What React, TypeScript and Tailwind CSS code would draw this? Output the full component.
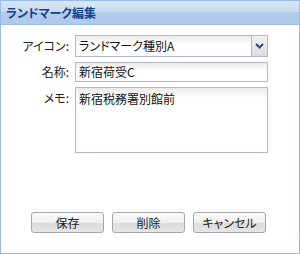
import React from "react";

function Btn({ label }: { label: string }) {
  return (
    <div className="w-[73px] h-[21px] rounded-[3px] border border-[#a6a6a6] bg-[linear-gradient(to_bottom,#fbfbfb_0%,#f0f0f0_50%,#dcdcdc_51%,#e6e6e6_100%)] flex items-center justify-center text-[12px] text-[#222] leading-none">
      {label}
    </div>
  );
}

export default function App() {
  return (
    <div className="w-[300px] h-[254px] border border-[#99bbe8] border-t-0 flex flex-col bg-white overflow-hidden font-['Noto_Sans_CJK_JP','Noto_Sans',sans-serif] [font-feature-settings:'palt']">
      <div className="h-[25px] shrink-0 bg-[linear-gradient(to_bottom,#d9e6f5_0%,#c9dbf0_48%,#b1cbea_50%,#afc9ea_100%)] border-t border-[#99bbe8] border-b border-b-[#99bbe8] flex items-center pl-[5px]">
        <span className="text-[12px] font-bold text-[#15428b] leading-none">ランドマーク編集</span>
      </div>
      <div className="flex-1 flex flex-col pt-[10px]">
        <div className="flex items-center h-[22px]">
          <div className="w-[69px] text-right text-[12px] text-[#222] pr-[1px]">アイコン:</div>
          <div className="ml-[5px] w-[193px] h-[22px] flex border border-[#b5b8c8]">
            <div className="flex-1 flex items-center pl-[3px] text-[12px] text-[#111] bg-[linear-gradient(to_bottom,#eaeaea_0%,#ffffff_40%)]">
              ランドマーク種別A
            </div>
            <div className="w-[16px] border-l border-[#b5b8c8] bg-[linear-gradient(to_bottom,#f2f2f4_0%,#dcdde3_100%)] flex items-center justify-center">
              <svg width="9" height="6" viewBox="0 0 9 6">
                <path d="M1 1 L4.5 4.5 L8 1" stroke="#2a4a8c" strokeWidth="2" fill="none" />
              </svg>
            </div>
          </div>
        </div>
        <div className="flex items-center h-[20px] mt-[5px]">
          <div className="w-[69px] text-right text-[12px] text-[#222] pr-[1px]">名称:</div>
          <div className="ml-[5px] w-[193px] h-[20px] flex items-center pl-[3px] border border-[#b5b8c8] text-[12px] text-[#111] bg-[linear-gradient(to_bottom,#eaeaea_0%,#ffffff_40%)]">
            新宿荷受C
          </div>
        </div>
        <div className="flex items-start h-[66px] mt-[5px]">
          <div className="w-[69px] text-right text-[12px] text-[#222] pr-[1px] pt-[2px]">メモ:</div>
          <div className="ml-[5px] w-[193px] h-[66px] pl-[3px] pt-[2px] border border-[#b5b8c8] text-[12px] text-[#111] bg-[linear-gradient(to_bottom,#eaeaea_0%,#ffffff_15%)]">
            新宿税務署別館前
          </div>
        </div>
        <div className="flex gap-[8px] pl-[30px] mt-[59px]">
          <Btn label="保存" />
          <Btn label="削除" />
          <Btn label="キャンセル" />
        </div>
      </div>
    </div>
  );
}
